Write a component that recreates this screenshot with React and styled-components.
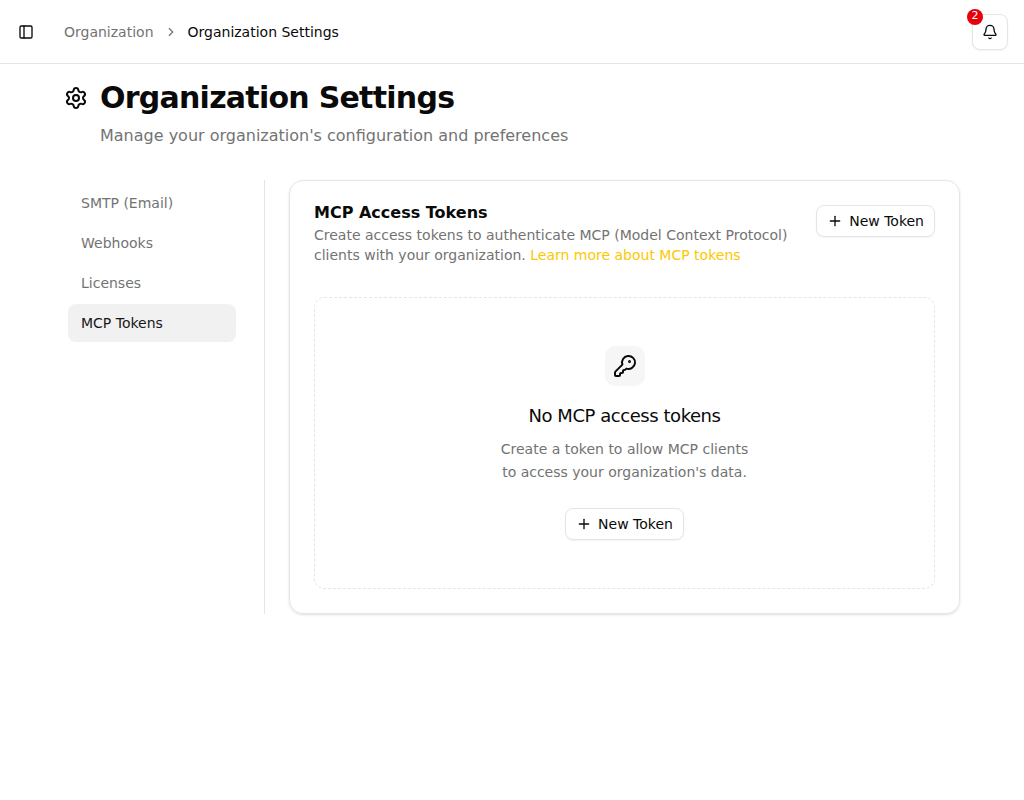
import React from "react";
import styled, { createGlobalStyle } from "styled-components";
import { PanelLeft, ChevronRight, Bell, Settings, Plus, KeyRound } from "lucide-react";

const GlobalStyle = createGlobalStyle`
  *, *::before, *::after { box-sizing: border-box; }
  body {
    margin: 0;
    background: #fff;
    color: #0a0a0a;
    font-family: "DejaVu Sans", sans-serif;
    font-size: 14px;
    line-height: 20px;
  }
  h1, h2, h3, p { margin: 0; }
  svg { display: block; flex-shrink: 0; }
`;

const Header = styled.header`
  display: flex;
  align-items: center;
  height: 64px;
  padding: 0 16px;
  border-bottom: 1px solid #e5e5e5;
`;

const IconButton = styled.button`
  position: relative;
  display: flex;
  align-items: center;
  justify-content: center;
  width: ${({ $size }) => $size}px;
  height: ${({ $size }) => $size}px;
  padding: 0;
  color: inherit;
  background: #fff;
  border: ${({ $outlined }) => ($outlined ? "1px solid #e5e5e5" : "0")};
  border-radius: 8px;
  box-shadow: ${({ $outlined }) => ($outlined ? "0 1px 2px rgba(0,0,0,.05)" : "none")};
`;

const Breadcrumb = styled.nav`
  display: flex;
  align-items: center;
  gap: 10px;
  flex: 1;
  margin-left: 28px;
  color: #737373;
`;

const Current = styled.span`
  color: #0a0a0a;
`;

const Badge = styled.span`
  position: absolute;
  top: -6px;
  left: -6px;
  width: 16px;
  height: 16px;
  border-radius: 50%;
  background: #e7000b;
  color: #fff;
  font-family: "DejaVu Sans", sans-serif;
  font-size: 11px;
  line-height: 14px;
  text-align: center;
`;

const Main = styled.main`
  padding: 16px 64px;
`;

const TitleRow = styled.div`
  display: flex;
  align-items: center;
  gap: 12px;
`;

const Title = styled.h1`
  font-size: 30px;
  line-height: 36px;
  font-weight: 700;
  letter-spacing: -0.75px;
`;

const Subtitle = styled.p`
  margin: 8px 0 0 36px;
  font-size: 16px;
  line-height: 24px;
  color: #737373;
`;

const Columns = styled.div`
  display: flex;
  gap: 24px;
  margin-top: 32px;
`;

const SideNav = styled.nav`
  display: flex;
  flex-direction: column;
  gap: 2px;
  width: 201px;
  padding: 4px 28px 0 4px;
  border-right: 1px solid #e5e5e5;
`;

const NavItem = styled.a`
  height: 38px;
  padding: 9px 13px;
  border-radius: 8px;
  color: ${({ $active }) => ($active ? "#171717" : "#737373")};
  background: ${({ $active }) => ($active ? "#f1f1f1" : "transparent")};
`;

const Card = styled.section`
  flex: 1;
  height: 434px;
  padding: 24px;
  border: 1px solid #e5e5e5;
  border-radius: 14px;
  box-shadow: 0 1px 3px rgba(0,0,0,.1), 0 1px 2px -1px rgba(0,0,0,.1);
`;

const CardHeader = styled.div`
  display: flex;
  justify-content: space-between;
  align-items: flex-start;
`;

const CardTitle = styled.h2`
  margin-bottom: 5px;
  font-size: 16px;
  line-height: 15px;
  font-weight: 700;
`;

const CardText = styled.p`
  width: 480px;
  color: #737373;
`;

const Link = styled.a`
  color: #fdc700;
`;

const Button = styled.button`
  display: inline-flex;
  align-items: center;
  gap: 6px;
  height: 32px;
  padding: 0 10px;
  color: #0a0a0a;
  font: inherit;
  white-space: nowrap;
  background: #fff;
  border: 1px solid #e5e5e5;
  border-radius: 8px;
  box-shadow: 0 1px 2px rgba(0,0,0,.05);
`;

const EmptyState = styled.div`
  display: flex;
  flex-direction: column;
  align-items: center;
  height: 292px;
  margin-top: 32px;
  padding-top: 48px;
  border: 1px dashed #e5e5e5;
  border-radius: 10px;
`;

const KeyTile = styled.div`
  display: flex;
  align-items: center;
  justify-content: center;
  width: 40px;
  height: 40px;
  border-radius: 10px;
  background: #f6f6f6;
`;

const EmptyTitle = styled.h3`
  margin-top: 16px;
  font-size: 18px;
  line-height: 28px;
  font-weight: 400;
  letter-spacing: -0.45px;
`;

const EmptyText = styled.p`
  margin: 8px 0 24px;
  line-height: 22.75px;
  text-align: center;
  color: #737373;
`;

const navItems = ["SMTP (Email)", "Webhooks", "Licenses", "MCP Tokens"];

const NewTokenButton = () => (
  <Button><Plus size={16} />New Token</Button>
);

export default function App() {
  return (
    <>
      <GlobalStyle />
      <Header>
        <IconButton $size={20} aria-label="Toggle sidebar"><PanelLeft size={16} /></IconButton>
        <Breadcrumb>
          <span>Organization</span>
          <ChevronRight size={14} />
          <Current>Organization Settings</Current>
        </Breadcrumb>
        <IconButton $size={36} $outlined aria-label="Notifications">
          <Bell size={16} />
          <Badge>2</Badge>
        </IconButton>
      </Header>
      <Main>
        <TitleRow>
          <Settings size={24} />
          <Title>Organization Settings</Title>
        </TitleRow>
        <Subtitle>Manage your organization's configuration and preferences</Subtitle>
        <Columns>
          <SideNav>
            {navItems.map((item) => (
              <NavItem key={item} $active={item === "MCP Tokens"}>{item}</NavItem>
            ))}
          </SideNav>
          <Card>
            <CardHeader>
              <div>
                <CardTitle>MCP Access Tokens</CardTitle>
                <CardText>
                  Create access tokens to authenticate MCP (Model Context Protocol) clients with your organization. <Link>Learn more about MCP tokens</Link>
                </CardText>
              </div>
              <NewTokenButton />
            </CardHeader>
            <EmptyState>
              <KeyTile><KeyRound size={24} /></KeyTile>
              <EmptyTitle>No MCP access tokens</EmptyTitle>
              <EmptyText>Create a token to allow MCP clients<br />to access your organization's data.</EmptyText>
              <NewTokenButton />
            </EmptyState>
          </Card>
        </Columns>
      </Main>
    </>
  );
}
